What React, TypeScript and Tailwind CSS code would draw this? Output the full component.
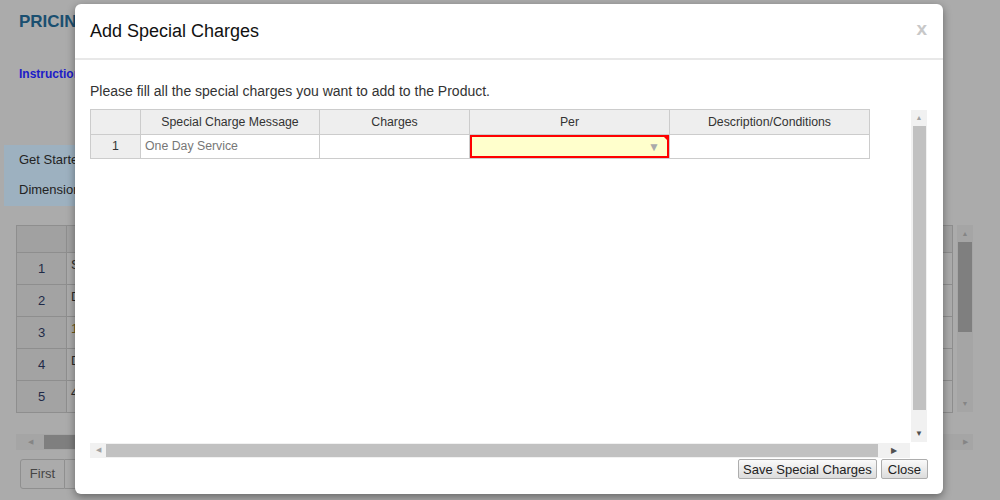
import React from "react";

// columns of the special charges grid
const columns = [
  { key: "msg", title: "Special Charge Message", width: "w-[179px]" },
  { key: "charges", title: "Charges", width: "w-[150px]" },
  { key: "per", title: "Per", width: "w-[200px]" },
  { key: "desc", title: "Description/Conditions", width: "w-[200px]" },
];

const bgRows = [
  { n: 1, text: "S", color: "text-[#2a2a2a]" },
  { n: 2, text: "D", color: "text-[#2a2a2a]" },
  { n: 3, text: "1", color: "text-[#6b5a1a]" },
  { n: 4, text: "D", color: "text-[#2a2a2a]" },
  { n: 5, text: "4", color: "text-[#2a2a2a]" },
];

const BackgroundPage = () => (
  <div className="flex flex-col">
    <h1 className="mt-[12px] ml-[19px] text-[17px] leading-[20px] font-bold text-[#1a4f70]">PRICING</h1>
    <a className="mt-[34px] ml-[19px] text-[12px] leading-[16px] font-bold text-[#1c1cc8]">Instructions</a>

    <div className="mt-[63px] ml-[4px] w-[300px] h-[61px] bg-[#9db1c0] pl-[15px] pt-[7px] flex flex-col gap-[14px] text-[13px] leading-[16px] text-[#232323]">
      <span>Get Started</span>
      <span>Dimensions</span>
    </div>

    <div className="mt-[19px] ml-[16px] flex">
      <table className="border-collapse w-[937px] text-[13px] text-[#1f2a48]">
        <thead>
          <tr className="h-[27px]">
            <th className="w-[50px] border border-[#8e8e8e] bg-[#a1a1a1]"></th>
            <th className="border border-[#8e8e8e] bg-[#a1a1a1]"></th>
          </tr>
        </thead>
        <tbody>
          {bgRows.map((r) => (
            <tr key={r.n} className="h-[32px]">
              <td className="border border-[#8e8e8e] bg-[#a3a3a3] text-center align-bottom pb-[6px]">{r.n}</td>
              <td className={`border border-[#8e8e8e] align-top pl-[4px] pt-[2px] ${r.color}`}>{r.text}</td>
            </tr>
          ))}
        </tbody>
      </table>
      <div className="ml-[4px] w-[16px] h-[187px] bg-[#a5a5a5] flex flex-col items-center">
        <span className="h-[17px] text-[7px] leading-[17px] text-[#858585]">▲</span>
        <div className="w-[14px] h-[90px] bg-[#7f7f7f]"></div>
        <div className="flex-1"></div>
        <span className="h-[17px] text-[7px] leading-[17px] text-[#858585]">▼</span>
      </div>
    </div>

    <div className="mt-[21px] ml-[16px] w-[957px] h-[16px] bg-[#a5a5a5] flex items-center">
      <span className="w-[28px] text-center text-[7px] text-[#858585]">◀</span>
      <div className="w-[260px] h-[14px] bg-[#7f7f7f]"></div>
      <div className="flex-1"></div>
      <span className="w-[16px] text-center text-[7px] text-[#858585]">▶</span>
    </div>

    <div className="mt-[9px] ml-[20px] flex">
      <button className="w-[45px] h-[30px] border border-[#8f8f8f] rounded-l-[3px] text-[13px] text-[#454545] bg-[#ababab]">First</button>
      <button className="w-[60px] h-[30px] border border-l-0 border-[#8f8f8f] bg-[#ababab]"></button>
    </div>
  </div>
);

const SpecialChargesGrid = () => (
  <div className="mt-[8px] flex flex-col w-[838px]">
    <div className="flex h-[333px]">
      <div className="w-[821px]">
        <table className="border-collapse text-[12.3px] text-[#333]">
          <thead>
            <tr className="h-[25px]">
              <th className="w-[50px] border border-[#ccc] bg-[#eee]"></th>
              {columns.map((c) => (
                <th key={c.key} className={`${c.width} border border-[#ccc] bg-[#eee] font-normal`}>{c.title}</th>
              ))}
            </tr>
          </thead>
          <tbody>
            <tr className="h-[23px]">
              <td className="border border-[#ccc] bg-[#eee] text-center">1</td>
              <td className="border border-[#ccc] pl-[4px] text-[#777]">One Day Service</td>
              <td className="border border-[#ccc]"></td>
              <td className="border border-[#ccc] p-0">
                <div className="relative h-[23px] border-2 border-[#ff0000] bg-[#ffffcc] flex items-center justify-end pr-[7px]">
                  <span className="text-[12px] leading-none text-[#aaa]">▼</span>
                  <span className="absolute -top-[2px] -right-[2px] w-0 h-0 border-t-[7px] border-l-[7px] border-t-[#ff0000] border-l-transparent"></span>
                </div>
              </td>
              <td className="border border-[#ccc]"></td>
            </tr>
          </tbody>
        </table>
      </div>
      {/* vertical scrollbar */}
      <div className="mt-[1px] w-[16px] bg-[#f1f1f1] flex flex-col items-center">
        <span className="h-[16px] text-[7px] leading-[16px] text-[#a3a3a3]">▲</span>
        <div className="w-[13px] h-[284px] bg-[#c1c1c1]"></div>
        <div className="flex-1"></div>
        <span className="h-[16px] text-[8px] leading-[16px] text-[#505050]">▼</span>
      </div>
    </div>
    {/* horizontal scrollbar */}
    <div className="mt-[1px] flex">
      <div className="w-[820px] h-[15px] bg-[#f1f1f1] flex items-center">
        <span className="w-[16px] text-center text-[7px] text-[#a3a3a3]">◀</span>
        <div className="w-[772px] h-[13px] bg-[#c1c1c1]"></div>
        <span className="flex-1 text-center text-[8px] text-[#505050]">▶</span>
      </div>
    </div>
  </div>
);

export default function App() {
  return (
    <div className="relative w-[1000px] h-[500px] overflow-hidden bg-[#ababab] font-['Liberation_Sans',Arial,sans-serif]">
      <BackgroundPage />

      <div className="absolute left-[75px] top-[4px] w-[868px] h-[490px] bg-white rounded-[6px] shadow-[0_3px_9px_rgba(0,0,0,0.4)] flex flex-col">
        <div className="h-[56px] pl-[15px] pr-[16px] flex items-center justify-between border-b-2 border-[#e8e8e8]">
          <h2 className="text-[18px] text-[#111]">Add Special Charges</h2>
          <span className="mb-[5px] text-[19px] font-bold text-[#c8c8c8] leading-none">x</span>
        </div>
        <div className="pl-[15px] pt-[21px] flex flex-col">
          <p className="text-[14px] leading-[20px] text-[#333]">Please fill all the special charges you want to add to the Product.</p>
          <SpecialChargesGrid />
          <div className="mt-[1px] pr-[15px] flex justify-end gap-[4px]">
            <button className="h-[20px] px-[4px] border border-[#adadad] rounded-[2px] bg-gradient-to-b from-[#fafafa] to-[#dcdcdc] text-[13px] text-[#222]">Save Special Charges</button>
            <button className="h-[20px] px-[6px] border border-[#adadad] rounded-[2px] bg-gradient-to-b from-[#fafafa] to-[#dcdcdc] text-[13px] text-[#222]">Close</button>
          </div>
        </div>
      </div>
    </div>
  );
}
